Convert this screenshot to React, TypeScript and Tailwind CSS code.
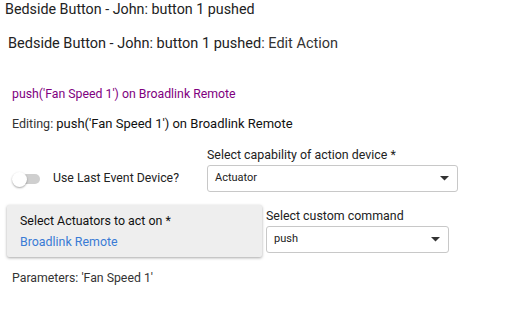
function Select({ value, width }: { value: string; width: string }) {
  return (
    <div
      className={`flex h-[27px] items-center justify-between rounded-[3px] border border-[#c8c8c8] bg-white pl-[7px] pr-[8px] text-[11px] text-[#222] ${width}`}
    >
      <span>{value}</span>
      <svg width="9" height="5" viewBox="0 0 9 5">
        <path d="M0 0 L9 0 L4.5 4.5 Z" fill="#333" />
      </svg>
    </div>
  );
}

export default function App() {
  return (
    <div
      className="h-[321px] w-[517px] bg-white text-[#222]"
      style={{ fontFamily: "Roboto, 'Liberation Sans', sans-serif" }}
    >
      <div className="pl-[5px] pt-[1px] text-[14.3px] leading-[17px]">
        Bedside Button - John: button 1 pushed
      </div>

      <div className="mt-[17px] pl-[8px] text-[14.5px] leading-[18px]">
        Bedside Button - John: button 1 pushed<span className="text-[#333]">: Edit Action</span>
      </div>

      <div className="mt-[33px] pl-[12px] text-[12.3px] leading-[16px] text-[#800080]">
        push('Fan Speed 1') on Broadlink Remote
      </div>

      <div className="mt-[14px] pl-[12px] text-[12.5px] leading-[16px] text-[#333]">
        Editing: <span className="text-[13px] text-[#111]">push('Fan Speed 1') on Broadlink Remote</span>
      </div>

      <div className="mt-[15px] flex items-end">
        <div className="flex h-[27px] w-[207px] items-center pl-[12px]">
          <div className="relative h-[14px] w-[28px]">
            <div className="absolute left-[6px] top-[2px] h-[10px] w-[22px] rounded-full bg-[#cfcfcf]" />
            <div className="absolute left-0 top-0 h-[15px] w-[15px] rounded-full bg-white shadow-[0_1px_2px_rgba(0,0,0,0.35)]" />
          </div>
          <span className="ml-[13px] text-[12.3px] text-[#222]">Use Last Event Device?</span>
        </div>
        <div className="flex flex-col">
          <span className="mb-[2px] text-[12.4px] leading-[16px]">Select capability of action device *</span>
          <Select value="Actuator" width="w-[251px]" />
        </div>
      </div>

      <div className="mt-[13px] flex items-start">
        <div className="ml-[7px] h-[52px] w-[255px] rounded-[2px] bg-[#eeeeee] pl-[13px] pt-[8px] shadow-[0_1px_3px_rgba(0,0,0,0.35)]">
          <div className="text-[12.4px] leading-[16px] text-[#111]">Select Actuators to act on *</div>
          <div className="mt-[5px] text-[12.4px] leading-[16px] text-[#3a7bd5]">Broadlink Remote</div>
        </div>
        <div className="ml-[4px] mt-[3px] flex flex-col">
          <span className="mb-[2px] text-[12.4px] leading-[16px]">Select custom command</span>
          <Select value="push" width="w-[183px]" />
        </div>
      </div>

      <div className="mt-[13px] pl-[12px] text-[12.3px] leading-[16px] text-[#333]">
        Parameters: 'Fan Speed 1'
      </div>
    </div>
  );
}
